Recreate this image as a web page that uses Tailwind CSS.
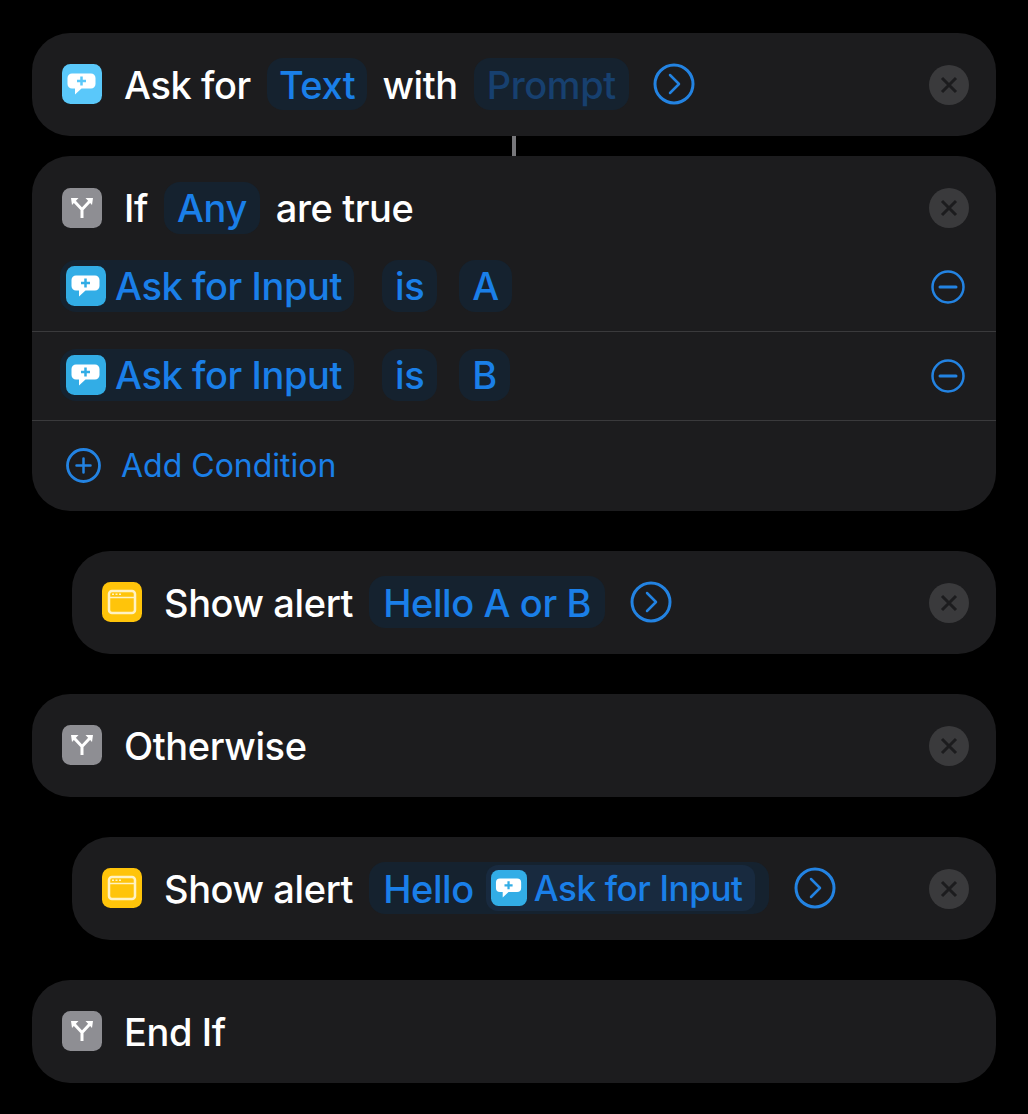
<!DOCTYPE html>
<html><head><meta charset="utf-8"><script src="https://cdn.jsdelivr.net/npm/@tailwindcss/browser@4"></script></head>
<body class="bg-black">
<div class="w-[1028px] h-[1114px] overflow-hidden bg-black pt-[33px] pl-[32px] pr-[32px] font-['Inter','Liberation_Sans',sans-serif] text-[38px] font-[450] tracking-[-0.4px] text-white">

<!-- Ask for -->
<div class="h-[103px] rounded-[38px] bg-[#1c1c1e] flex items-center pb-[1px] pl-[30px] pr-[27px]">
  <svg class="w-[40px] h-[40px] shrink-0" viewBox="0 0 40 40"><rect width="40" height="40" rx="8.5" fill="#5ac8fa"/><path d="M10 9.5h19a4.5 4.5 0 0 1 4.5 4.5v6a4.5 4.5 0 0 1-4.5 4.5H19.5L13 30.5v-6h-3A4.5 4.5 0 0 1 5.5 20v-6A4.5 4.5 0 0 1 10 9.5z" fill="#fff"/><path d="M19.5 12.5v9M15 17h9" stroke="#5ac8fa" stroke-width="2.5"/></svg>
  <span class="ml-[22px] pt-[2px]">Ask for</span>
  <span class="ml-[16px] h-[52px] px-[12px] pt-[2px] rounded-[16px] bg-[#15222f] text-[#1a7fe8] flex items-center">Text</span>
  <span class="ml-[15px] pt-[2px]">with</span>
  <span class="ml-[16px] h-[52px] px-[13px] pt-[2px] rounded-[16px] bg-[#15222f] text-[#17406f] flex items-center">Prompt</span>
  <svg class="ml-[24px] w-[42px] h-[42px] shrink-0" viewBox="0 0 42 42" fill="none" stroke="#2383e2" stroke-width="3"><circle cx="21" cy="21" r="19"/><path d="M17 12l9 9-9 9" stroke-linecap="round" stroke-linejoin="round" stroke-width="2.5"/></svg>
  <svg class="ml-auto mt-[2px] w-[40px] h-[40px] shrink-0" viewBox="0 0 40 40"><circle cx="20" cy="20" r="20" fill="#3a3a3c"/><path d="M13 13l14 14M27 13L13 27" stroke="#1c1c1e" stroke-width="3"/></svg>
</div>

<div class="flex justify-center h-[20px]"><div class="w-[4px] h-[20px] bg-[#77777b]"></div></div>

<!-- If -->
<div class="rounded-[38px] bg-[#1c1c1e] h-[355px] flex flex-col">
  <div class="h-[87px] shrink-0 flex items-center pl-[30px] pr-[27px] pt-[16px]">
    <svg class="w-[40px] h-[40px] shrink-0" viewBox="0 0 40 40"><rect width="40" height="40" rx="8.5" fill="#8e8e93"/><path d="M20 30V21.5L12.5 13.5M20 21.5l7.5-8" fill="none" stroke="#fff" stroke-width="3"/><path d="M9 10h7.500L10 17zM31 10h-7.500L30 17z" fill="#fff"/></svg>
    <span class="ml-[22px] pt-[2px]">If</span>
    <span class="ml-[16px] h-[52px] px-[13px] pt-[2px] rounded-[16px] bg-[#15222f] text-[#1a7fe8] flex items-center">Any</span>
    <span class="ml-[16px] pt-[2px]">are true</span>
    <svg class="ml-auto w-[40px] h-[40px] shrink-0" viewBox="0 0 40 40"><circle cx="20" cy="20" r="20" fill="#3a3a3c"/><path d="M13 13l14 14M27 13L13 27" stroke="#1c1c1e" stroke-width="3"/></svg>
  </div>
  <div class="h-[88px] shrink-0 flex items-center pb-[2px] pl-[28px] pr-[31px] text-[#1a7fe8]">
    <span class="h-[52px] pl-[6px] pr-[12px] rounded-[16px] bg-[#15222f] flex items-center">
      <svg class="w-[40px] h-[40px] shrink-0 mr-[9px]" viewBox="0 0 40 40"><rect width="40" height="40" rx="8.5" fill="#32ade6"/><path d="M10 9.5h19a4.5 4.5 0 0 1 4.5 4.5v6a4.5 4.5 0 0 1-4.5 4.5H19.5L13 30.5v-6h-3A4.5 4.5 0 0 1 5.5 20v-6A4.5 4.5 0 0 1 10 9.5z" fill="#fff"/><path d="M19.5 12.5v9M15 17h9" stroke="#32ade6" stroke-width="2.5"/></svg>
      <span>Ask for Input</span></span>
    <span class="ml-[28px] h-[52px] px-[13px] rounded-[16px] bg-[#15222f] flex items-center">is</span>
    <span class="ml-[22px] h-[52px] px-[13px] rounded-[16px] bg-[#15222f] flex items-center">A</span>
    <svg class="ml-auto mt-[2px] w-[34px] h-[34px] shrink-0" viewBox="0 0 34 34" fill="none" stroke="#2383e2" stroke-width="2.5"><circle cx="17" cy="17" r="15.5"/><path d="M9 17h16" stroke-linecap="round" stroke-width="3"/></svg>
  </div>
  <div class="h-[89px] shrink-0 flex items-center pb-[2px] pl-[28px] pr-[31px] text-[#1a7fe8] border-t border-[#3a3a3c]">
    <span class="h-[52px] pl-[6px] pr-[12px] rounded-[16px] bg-[#15222f] flex items-center">
      <svg class="w-[40px] h-[40px] shrink-0 mr-[9px]" viewBox="0 0 40 40"><rect width="40" height="40" rx="8.5" fill="#32ade6"/><path d="M10 9.5h19a4.5 4.5 0 0 1 4.5 4.5v6a4.5 4.5 0 0 1-4.5 4.5H19.5L13 30.5v-6h-3A4.5 4.5 0 0 1 5.5 20v-6A4.5 4.5 0 0 1 10 9.5z" fill="#fff"/><path d="M19.5 12.5v9M15 17h9" stroke="#32ade6" stroke-width="2.5"/></svg>
      <span>Ask for Input</span></span>
    <span class="ml-[28px] h-[52px] px-[13px] rounded-[16px] bg-[#15222f] flex items-center">is</span>
    <span class="ml-[22px] h-[52px] px-[13px] rounded-[16px] bg-[#15222f] flex items-center">B</span>
    <svg class="ml-auto mt-[2px] w-[34px] h-[34px] shrink-0" viewBox="0 0 34 34" fill="none" stroke="#2383e2" stroke-width="2.5"><circle cx="17" cy="17" r="15.5"/><path d="M9 17h16" stroke-linecap="round" stroke-width="3"/></svg>
  </div>
  <div class="h-[90px] shrink-0 flex items-center pl-[34px] text-[#1a7fe8] text-[32px] font-normal tracking-normal border-t border-[#3a3a3c]">
    <svg class="w-[35px] h-[35px] shrink-0" viewBox="0 0 35 35" fill="none" stroke="#2383e2" stroke-width="2.8"><circle cx="17.5" cy="17.5" r="16"/><path d="M10.5 17.5h14M17.5 10.5v14" stroke-linecap="round" stroke-width="2.5"/></svg>
    <span class="ml-[20px]">Add Condition</span>
  </div>
</div>

<!-- Show alert 1 -->
<div class="ml-[40px] mt-[40px] h-[103px] rounded-[38px] bg-[#1c1c1e] flex items-center pb-[1px] pl-[30px] pr-[27px]">
  <svg class="w-[40px] h-[40px] shrink-0" viewBox="0 0 40 40"><rect width="40" height="40" rx="8.5" fill="#ffc40a"/><rect x="7" y="9" width="26" height="22" rx="3" fill="none" stroke="#fff2c4" stroke-width="2.5"/><path d="M8 15.5h24" stroke="#fff2c4" stroke-width="1.5"/><path d="M10 12.3h2M13.5 12.3h2M17 12.3h2" stroke="#fff2c4" stroke-width="1.5"/></svg>
  <span class="ml-[22px] pt-[2px]">Show alert</span>
  <span class="ml-[16px] h-[52px] px-[14px] pt-[2px] rounded-[16px] bg-[#15222f] text-[#1a7fe8] flex items-center">Hello A or B</span>
  <svg class="ml-[25px] w-[42px] h-[42px] shrink-0" viewBox="0 0 42 42" fill="none" stroke="#2383e2" stroke-width="3"><circle cx="21" cy="21" r="19"/><path d="M17 12l9 9-9 9" stroke-linecap="round" stroke-linejoin="round" stroke-width="2.5"/></svg>
  <svg class="ml-auto mt-[2px] w-[40px] h-[40px] shrink-0" viewBox="0 0 40 40"><circle cx="20" cy="20" r="20" fill="#3a3a3c"/><path d="M13 13l14 14M27 13L13 27" stroke="#1c1c1e" stroke-width="3"/></svg>
</div>

<!-- Otherwise -->
<div class="mt-[40px] h-[103px] rounded-[38px] bg-[#1c1c1e] flex items-center pb-[1px] pl-[30px] pr-[27px]">
  <svg class="w-[40px] h-[40px] shrink-0" viewBox="0 0 40 40"><rect width="40" height="40" rx="8.5" fill="#8e8e93"/><path d="M20 30V21.5L12.5 13.5M20 21.5l7.5-8" fill="none" stroke="#fff" stroke-width="3"/><path d="M9 10h7.500L10 17zM31 10h-7.500L30 17z" fill="#fff"/></svg>
  <span class="ml-[22px] pt-[2px]">Otherwise</span>
  <svg class="ml-auto mt-[2px] w-[40px] h-[40px] shrink-0" viewBox="0 0 40 40"><circle cx="20" cy="20" r="20" fill="#3a3a3c"/><path d="M13 13l14 14M27 13L13 27" stroke="#1c1c1e" stroke-width="3"/></svg>
</div>

<!-- Show alert 2 -->
<div class="ml-[40px] mt-[40px] h-[103px] rounded-[38px] bg-[#1c1c1e] flex items-center pb-[1px] pl-[30px] pr-[27px]">
  <svg class="w-[40px] h-[40px] shrink-0" viewBox="0 0 40 40"><rect width="40" height="40" rx="8.5" fill="#ffc40a"/><rect x="7" y="9" width="26" height="22" rx="3" fill="none" stroke="#fff2c4" stroke-width="2.5"/><path d="M8 15.5h24" stroke="#fff2c4" stroke-width="1.5"/><path d="M10 12.3h2M13.5 12.3h2M17 12.3h2" stroke="#fff2c4" stroke-width="1.5"/></svg>
  <span class="ml-[22px] pt-[2px]">Show alert</span>
  <span class="ml-[16px] h-[52px] pl-[14px] pr-[14px] rounded-[16px] bg-[#15222f] text-[#1a7fe8] flex items-center"><span class="pt-[2px]">Hello</span>
    <span class="ml-[12px] h-[46px] pl-[5px] pr-[12px] rounded-[12px] bg-[#182a3f] flex items-center text-[35px]">
      <svg class="w-[36px] h-[36px] shrink-0 mr-[7px]" viewBox="0 0 40 40"><rect width="40" height="40" rx="8.5" fill="#32ade6"/><path d="M10 9.5h19a4.5 4.5 0 0 1 4.5 4.5v6a4.5 4.5 0 0 1-4.5 4.5H19.5L13 30.5v-6h-3A4.5 4.5 0 0 1 5.5 20v-6A4.5 4.5 0 0 1 10 9.5z" fill="#fff"/><path d="M19.5 12.5v9M15 17h9" stroke="#32ade6" stroke-width="2.5"/></svg>
      <span>Ask for Input</span></span>
  </span>
  <svg class="ml-[25px] w-[42px] h-[42px] shrink-0" viewBox="0 0 42 42" fill="none" stroke="#2383e2" stroke-width="3"><circle cx="21" cy="21" r="19"/><path d="M17 12l9 9-9 9" stroke-linecap="round" stroke-linejoin="round" stroke-width="2.5"/></svg>
  <svg class="ml-auto mt-[2px] w-[40px] h-[40px] shrink-0" viewBox="0 0 40 40"><circle cx="20" cy="20" r="20" fill="#3a3a3c"/><path d="M13 13l14 14M27 13L13 27" stroke="#1c1c1e" stroke-width="3"/></svg>
</div>

<!-- End If -->
<div class="mt-[40px] h-[103px] rounded-[38px] bg-[#1c1c1e] flex items-center pb-[1px] pl-[30px] pr-[27px]">
  <svg class="w-[40px] h-[40px] shrink-0" viewBox="0 0 40 40"><rect width="40" height="40" rx="8.5" fill="#8e8e93"/><path d="M20 30V21.5L12.5 13.5M20 21.5l7.5-8" fill="none" stroke="#fff" stroke-width="3"/><path d="M9 10h7.500L10 17zM31 10h-7.500L30 17z" fill="#fff"/></svg>
  <span class="ml-[22px] pt-[2px]">End If</span>
</div>

</div>
</body></html>
